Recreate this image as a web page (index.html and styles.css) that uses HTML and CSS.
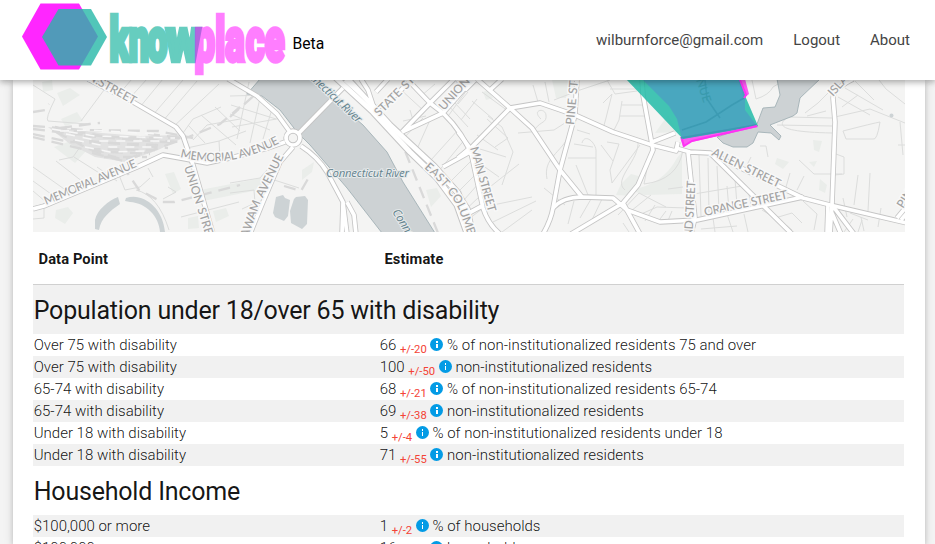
FILE: index.html
```html
<!DOCTYPE html>
<html lang="en">
<head>
<meta charset="utf-8">
<title>Knowplace</title>
<link rel="stylesheet" href="styles.css">
</head>
<body>
<header class="topbar">
  <a class="brand">
    <svg class="logo" width="293" height="80" viewBox="0 0 293 80">
      <path fill="#ff26ff" d="M22 36.5 40.500 3.500H79L98 36.500 79 69.500H40.500z"/>
      <path fill="#26b8a7" fill-opacity=".8" d="M42 37 58.500 9H91L107 37 91 65.500H58.500z"/>
      <g class="wordmark">
        <g opacity=".7" fill="#26b8a5" stroke="#26b8a5"><text transform="translate(109.500 60.500) scale(.58 1)" x="0 33 65">kno</text><text transform="translate(166 60.500) scale(.77 1)">w</text></g>
        <g opacity=".5" fill="#f0f" stroke="#f0f"><text transform="translate(194.500 60.500) scale(.59 1)" x="0 35 52 87 119">place</text></g>
      </g>
    </svg>
    <span class="beta">Beta</span>
  </a>
  <nav class="nav"><a>wilburnforce@gmail.com</a><a>Logout</a><a>About</a></nav>
</header>
<main class="card">
<svg class="map" viewBox="33 80 872 152" width="872" height="152">
  <defs>
    <g id="roads">
      <path d="M88 79 133 102 176 127 183 136 193 165 213 234"/>
      <path d="M33 209 44 206 137 167 163 155 180 158 207 163 230 158 265 149 285 142"/>
      <path d="M293 147 280 162 263 202 250 234"/>
      <path d="M298 134 343 88"/>
      <path d="M228 79 257 96 277 114 290 132M301 146Q318 157 327 172L343 202 347 234M347 202 354 215 356 234M343 202 342 234"/>
      <path d="M345 80 373 105 376 109 397 94 412 79M373 105 368 90 361 79M376 92 388 79"/>
      <path d="M402 132 430 103 407 79M430 103 443 113 472 80M430 103 454 79M402 132 443 113Q464 133 474 161M443 167 472 151"/>
      <path d="M477 79 510 108 532 128 560 170 582 197M467 152 510 108M490 90 502 79M458 80 466 89 475 80"/>
      <path d="M510 108 540 103 575 115 613 132 652 145 676 151 678 142"/>
      <path d="M577 79 575 115 560 170 553 208Q551 220 543 234"/>
      <path d="M553 208Q563 197 582 197L613 198 627 210 660 222 697 220 803 197"/>
      <path d="M571 234 623 203 638 185 653 150 643 95 642 79M623 203 640 234M652 142 675 133"/>
      <path d="M458 132 470 148 483 208Q488 224 500 234M470 148 458 158M458 193 468 209 473 234M469 213 482 206"/>
      <path d="M676 148 690 152 710 153 803 198 830 205 907 223M710 153 792 234M688 152 695 218 691 234"/>
      <path d="M853 79Q833 89 833 98L835 122 832 205 830 234M832 205 854 234M828 205 827 234M832 213 841 234M897 218 907 206M901 220 907 213"/>
    </g>
    <g id="highway"><path d="M334 76 373 112 410 152 437 178 457 205 468 236"/><path d="M345 76 390 125 434 166 458 193 473 236"/></g>
    <g id="ring"><circle cx="293" cy="138" r="7"/></g>
  </defs>
  <rect class="land" x="33" y="80" width="872" height="152"/>
  <g class="park">
    <path d="M54 147 68 142 87 150 75 163zM57 93 70 88 80 95 63 106zM42 82 52 80 53 90 43 92zM61 119 77 112 83 121 65 126zM56 210 68 207 73 213 65 224 55 218zM165 174 174 172 181 189 173 194zM188 218 198 216 199 228 188 229zM200 190 267 177 268 188 203 201zM213 211 226 208 229 216 216 222zM229 189 255 181 260 187 232 195zM302 170 314 162 312 172 302 180zM426 190 437 188 441 196 431 207zM552 80H571L566 98 556 98zM621 184 631 174 642 177 632 196 616 195zM630 190Q663 185 677 158L682 152V194L645 195zM655 133 668 115 678 132zM813 140 822 141 819 152 814 150zM777 158 789 162 783 169 775 164zM809 162 817 161 814 167zM820 179 827 185 825 193 819 190zM483 92 488 90 493 98 486 100z"/>
  </g>
  <g class="minor">
    <path d="M33 85 55 99Q45 119 48 121L87 124M81 121 110 82 99 79M152 116 183 80M162 122 197 81M172 128 219 84M140 107 163 79M129 99 147 79M119 94 132 79M183 133 193 119 221 107M188 125 205 143M201 115 236 145M215 107 240 131M187 148 219 141 220 158M193 140 207 125 240 119M219 141 246 131"/>
    <path d="M56 161 83 182M33 167 67 191M33 181 58 199M33 191 46 202M74 157 104 176M97 167 117 181M59 160 73 157 80 147M33 207 44 204V218L33 219M119 175 125 190 140 187 150 178M148 168 153 177M163 199 176 192 168 187M181 217 239 202M136 190Q158 195 169 230"/>
    <path d="M230 96 268 95M231 105 276 119M230 114 270 130M237 139 249 82M250 143 260 98M263 139 272 109M232 127 282 118M230 183 260 178 272 164M230 193 254 190 255 203 242 209M265 177 299 188"/>
    <path d="M399 88 424 111M410 79 435 105M421 96 435 84M403 121 426 116M410 110 415 127M430 120 413 158M423 118 400 142M458 130 431 160M466 138 438 172M472 160 445 187M476 174 450 200M479 183 456 209M480 196 459 216M482 209 466 221M469 82 454 102 470 119M446 119 467 90M448 105 468 127"/>
    <path d="M472 101 493 119M482 92 508 111M488 116 502 127 513 152 502 185M495 147 508 138 487 119M477 135 498 150M480 149 506 157M475 160 499 177M481 194 519 164M488 206 532 197M493 222 536 201M502 232 532 210M477 99 461 120M468 92 458 104"/>
    <path d="M533 85 538 102M545 82 549 102M554 100 580 90 610 80M541 119C531 110 545 107 546 115S541 121 535 129M518 133 554 130 568 121M544 188 565 205M547 179C543 158 560 154 571 133M577 130 590 134M582 143C585 132 597 144 596 152V200M568 158H596M574 144 593 147M576 165 588 195 598 196M603 103 612 94 606 118 603 129M622 101 619 120 613 132M620 116H645M622 105H644M607 142 619 144 610 170 612 183 640 145M601 145 613 161M625 190C612 180 640 160 638 141M650 153 644 184Q678 180 683 150M607 80 615 94 637 91M610 89H642"/>
    <path d="M568 224 574 201M580 218 591 199M590 224 602 199M618 215 639 193 666 207M631 211 651 195M639 215 657 207 687 208M645 221 655 205M623 223 629 232M657 223 666 211M667 223 672 211M668 189 683 187"/>
    <path d="M752 80 756 99Q769 95 773 87L778 84M777 125 832 126M832 118 788 117C775 126 782 132 832 133M835 117 870 109 905 123M843 131Q874 123 880 122 877 141 873 139H846zM805 113 818 103 833 88M807 116 826 111M842 107 858 95M838 97 870 115M845 88 883 110M855 81 874 100M879 80 886 89 905 104M799 160 814 174H842M836 154 844 157V174L834 175M900 122 903 155M898 145H905M858 175 854 205M870 173 868 211M843 198 847 217M861 217 864 231M881 208 878 227M797 190 804 176M786 187 790 173M760 146H766L768 157M745 169 751 157"/>
    <path d="M699 155 701 216M708 158 709 213M694 194 742 186M717 166 719 210M727 186 729 210M735 179 737 205M748 190 751 204M701 229 737 226M713 218 715 232M727 214 733 232M744 214 748 232M762 210 775 218 792 213 802 223M764 207 772 198 783 202M803 201 817 214 814 230M781 221 792 230M844 232 853 219M850 213 868 220M858 232 862 220"/>
  </g>
  <g class="yard"><path d="M48 127 70 129 102 133 140 136 180 135 183 138 158 150 125 162 95 157 70 144z"/></g>
  <g class="rail">
    <path d="M33 112 45 110 49 104M33 126 84 130 158 131 193 138M33 129 75 134 179 142M33 134 70 142 165 145M33 137 82 149 155 150M55 127 107 137 187 138M56 132 91 150 124 160 158 148M60 128 90 124 100 123M92 153 124 161 186 138 220 124 240 107"/>
    <path d="M84 136 176 143M89 141 168 148M92 151 150 154M104 157 147 157M148 134 182 138M122 165 139 190 162 202H174L240 185"/>
    <path d="M343 81 401 141 438 233M230 117 259 91 266 81M284 186 301 191 309 177"/>
  </g>
  <g class="gaps"><path d="M52 129 95 136 175 138M66 134 100 141 170 141M75 140 110 147 158 147M85 147 110 152 148 151M60 131 90 130 158 134"/></g>
  <g class="water">
    <path d="M247 94 260 79H310L363 125 387 152 403 182 435 233H382L347 188 310 145 297 132 280 110 262 96z"/>
    <path d="M777 79 780 95 775 107 763 108 757 124 717 137 723 143 733 147 747 147 753 143 758 132 771 133 779 140 781 136 770 125 793 116 797 113 800 98 820 79z"/>
  </g>
  <g class="pond">
    <path d="M118 197C109 200 97 210 95 220V229L99 230C101 218 110 211 120 204zM126 198C142 192 163 207 165 232H160C159 216 146 203 130 202L125 201z"/>
    <path d="M276 197 283 195 285 198 290 200 288 216 284 221 275 217 273 213zM296 197 305 196 308 200 307 224 302 229 291 223 290 211 294 199z"/>
  </g>
  <circle class="pond" cx="891.500" cy="115.500" r="2"/>
  <use href="#highway" class="casing wide"/><use href="#roads" class="casing"/><use href="#ring" class="casing"/>
  <use href="#highway" class="fill wide-fill"/><use href="#roads" class="fill"/><use href="#ring" class="fill"/>
  <g class="area">
    <path fill="#fb41f1" fill-opacity=".85" d="M680 137 683 147 691 142 758 127 756 124zM738 79H745L749 94 744 98z"/>
    <path fill="#1ebba6" fill-opacity=".83" d="M626 79H740L746 98 758 126 683 139z"/>
    <path fill="#5188cc" fill-opacity=".48" d="M642 79 669 106 677 119 682 139 757 126 745 110 745 98 739 79z"/>
    <path class="under" d="M682 130 706 122 732 105 744 98M705 80 707 99 720 118M681 138 756 125"/>
    <path class="edge" d="M682 139 684 146 692 141 757 126M740 80 746 95 744 98"/>
  </g>
  <defs>
    <path id="p2" d="M46 205 139 166"/><path id="p3" d="M180 157Q207 164 231 160T284 141"/>
    <path id="p4" d="M184 167 207 240"/><path id="p5" d="M245 246 260 204 283 158"/><path id="p6" d="M424 168Q450 190 459 210L472 246"/>
  </defs>
  <g class="label">
    <text transform="translate(87 79) rotate(29)">N.STREET</text>
    <text><textPath href="#p2" textLength="99">MEMORIAL AVENUE</textPath></text>
    <text><textPath href="#p3" textLength="103">MEMORIAL AVENUE</textPath></text>
    <text><textPath href="#p4">UNION STREET</textPath></text>
    <text><textPath href="#p5">GAWAM AVENUE</textPath></text>
    <text><textPath href="#p6">EAST COLUMBUS</textPath></text>
    <text transform="translate(379 117) rotate(-45)">STATE STREET</text>
    <text transform="translate(444 111) rotate(-48)">UNION ST</text>
    <text transform="translate(470 148) rotate(74)" textLength="67">MAIN STREET</text>
    <text transform="translate(574 125) rotate(-85)">PINE STREET</text>
    <text transform="translate(692 246) rotate(-87)" textLength="65">OND STREET</text>
    <text transform="translate(711 155) rotate(26)" textLength="75">ALLEN STREET</text>
    <text transform="translate(705 216) rotate(-12)" textLength="85">ORANGE STREET</text>
    <text transform="translate(833 97) rotate(-48)">ISLAND</text>
    <text transform="translate(903 209) rotate(-57)">PINE</text>
    <text transform="translate(696 80) rotate(72)" class="covered">NUE</text>
  </g>
  <g class="river-label">
    <text x="326" y="177" textLength="83">Connecticut River</text>
    <text transform="translate(299 69) rotate(43)" textLength="80">Connecticut River</text>
    <text transform="translate(392 212) rotate(58)" textLength="83">Connecticut River</text>
  </g>
</svg>
<table class="data">
  <thead><tr><th class="name">Data Point</th><th>Estimate</th></tr></thead>
  <tbody>
    <tr class="group"><td colspan="2">Population under 18/over 65 with disability</td></tr>
    <tr><td>Over 75 with disability</td><td>66 <sub>+/-20</sub> <i class="info"></i> % of non-institutionalized residents 75 and over</td></tr>
    <tr><td>Over 75 with disability</td><td>100 <sub>+/-50</sub> <i class="info"></i> non-institutionalized residents</td></tr>
    <tr><td>65-74 with disability</td><td>68 <sub>+/-21</sub> <i class="info"></i> % of non-institutionalized residents 65-74</td></tr>
    <tr><td>65-74 with disability</td><td>69 <sub>+/-38</sub> <i class="info"></i> non-institutionalized residents</td></tr>
    <tr><td>Under 18 with disability</td><td>5 <sub>+/-4</sub> <i class="info"></i> % of non-institutionalized residents under 18</td></tr>
    <tr><td>Under 18 with disability</td><td>71 <sub>+/-55</sub> <i class="info"></i> non-institutionalized residents</td></tr>
    <tr class="group"><td colspan="2">Household Income</td></tr>
    <tr><td>$100,000 or more</td><td>1 <sub>+/-2</sub> <i class="info"></i> % of households</td></tr>
    <tr><td>$100,000 or more</td><td>16 <sub>+/-25</sub> <i class="info"></i> households</td></tr>
  </tbody>
</table>
</main>
</body>
</html>
```
FILE: styles.css
```css
* { box-sizing: border-box; }
body {
  height: 544px;
  margin: 0;
  overflow: hidden;
  background: #f4f4f4;
  color: rgba(0, 0, 0, .92);
  font: 300 15px/22px Roboto, sans-serif;
}
.topbar {
  position: relative;
  z-index: 1;
  display: flex;
  justify-content: space-between;
  height: 80px;
  padding-right: 25px;
  background: #fff;
  box-shadow: 0 2px 5px rgba(0, 0, 0, .16), 0 2px 8px rgba(0, 0, 0, .2);
}
.brand { display: flex; color: #000; font-weight: 400; }
.logo { display: block; }
.wordmark { font: 900 62px Roboto, sans-serif; stroke-width: 4.500px; }
.beta { margin-left: -.5px; padding-top: 33px; font-size: 15.700px; }
.nav { display: flex; gap: 30px; color: #444; font-size: 15px; font-weight: 400; line-height: 80px; }
.card {
  width: 912px;
  height: 464px;
  overflow: hidden;
  margin-left: 13px;
  padding: 0 20px;
  background: #fff;
  box-shadow: 0 2px 5px rgba(0, 0, 0, .16), 0 2px 10px rgba(0, 0, 0, .12);
}
.map { display: block; fill: none; overflow: hidden; }
.land { fill: #f4f4f3; }
.park { fill: #eaedea; }
.minor { stroke: #dcdddc; stroke-width: 1px; }
.rail { stroke: #d9d9d9; stroke-width: 2.300px; stroke-dasharray: 12 7; }
.yard { fill: #e2e2e2; }
.gaps { stroke: #f7f7f7; stroke-width: 1.500px; stroke-dasharray: 9 8; }
.water { fill: #cdd2d4; stroke: #9aabb0; stroke-width: .8px; }
.pond { fill: #cdd3d5; }
.casing { stroke: #c5c5c5; stroke-width: 5.400px; stroke-linejoin: round; }
.fill { stroke: #fff; stroke-width: 3.700px; stroke-linejoin: round; }
.wide { stroke-width: 7px; }
.wide-fill { stroke-width: 5px; }
.edge { stroke: #ff32f4; stroke-width: 2px; }
.under { stroke: #3c9bb3; stroke-width: 1.500px; }
.label { fill: #a2a2a2; font: 500 11.800px Lato, "Open Sans", sans-serif; word-spacing: 1.500px; stroke: #f8f8f8; stroke-width: 3px; paint-order: stroke; }
.label .covered { fill: #399aac; stroke: none; }
.river-label { fill: #64838e; font: italic 500 11.500px "Open Sans", sans-serif; stroke: #e6eaeb; stroke-width: 2px; paint-order: stroke; }
.data { width: 871px; border-collapse: separate; border-spacing: 0; table-layout: fixed; }
.data th { height: 53px; padding: 1px 5.500px 0; border-bottom: 1px solid #d0d0d0; text-align: left; font-size: 14.700px; font-weight: 700; letter-spacing: .1px; }
.data .name { width: 346px; }
.data td { height: 22px; padding: 0 0 0 .7px; line-height: 22px; white-space: nowrap; }
.data tbody tr:nth-child(odd) { background: #f1f1f1; }
.data tbody tr:nth-child(even) { background: #fff; }
.data .group td { height: 49px; padding-top: 2px; font-size: 25px; font-weight: 400; letter-spacing: -.2px; }
sub { color: #f44336; font-size: 11.250px; line-height: 0; font-weight: 400; vertical-align: baseline; position: relative; top: 2.500px; }
.info { display: inline-block; position: relative; width: 13px; height: 13px; border-radius: 50%; background: #039be5; vertical-align: -1px; }
.info::before { content: ""; position: absolute; left: 6px; top: 3px; width: 1.500px; height: 1.500px; background: #fff; }
.info::after { content: ""; position: absolute; left: 6px; top: 6px; width: 1.500px; height: 4px; background: #fff; }
```
